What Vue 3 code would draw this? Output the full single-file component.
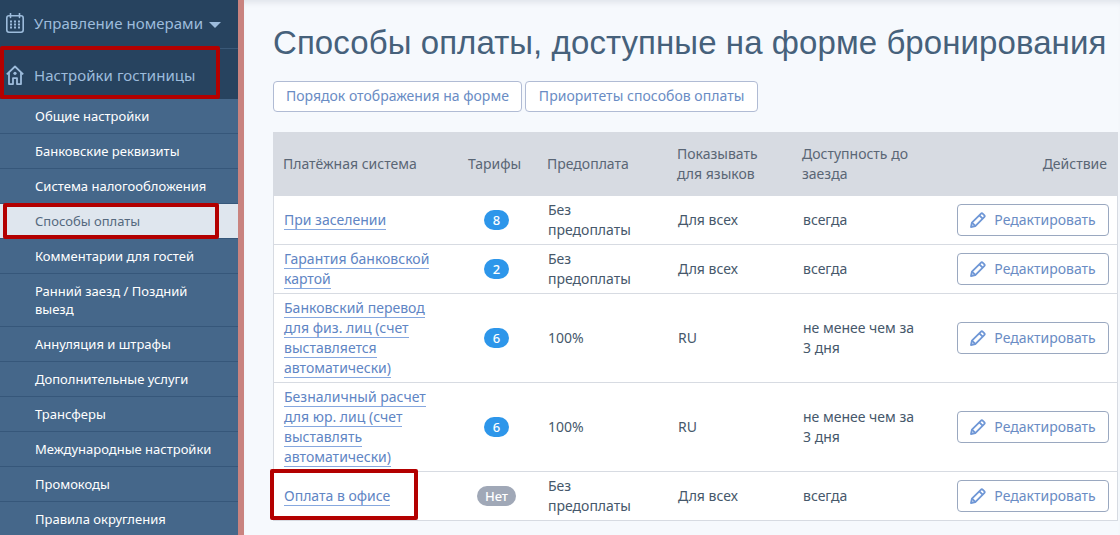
<script setup>
const subs = [
  'Общие настройки','Банковские реквизиты','Система налогообложения','Способы оплаты','Комментарии для гостей',
  'Ранний заезд / Поздний выезд','Аннуляция и штрафы','Дополнительные услуги','Трансферы','Международные настройки','Промокоды','Правила округления'
]
const rows = [
  { lines: ['При заселении'], n: '8', pre: ['Без', 'предоплаты'], lang: 'Для всех', av: 'всегда' },
  { lines: ['Гарантия банковской', 'картой'], n: '2', pre: ['Без', 'предоплаты'], lang: 'Для всех', av: 'всегда' },
  { lines: ['Банковский перевод', 'для физ. лиц (счет', 'выставляется', 'автоматически)'], n: '6', pre: ['100%'], lang: 'RU', av: 'не менее чем за 3 дня' },
  { lines: ['Безналичный расчет', 'для юр. лиц (счет', 'выставлять', 'автоматически)'], n: '6', pre: ['100%'], lang: 'RU', av: 'не менее чем за 3 дня' },
  { lines: ['Оплата в офисе'], n: 'Нет', off: true, pre: ['Без', 'предоплаты'], lang: 'Для всех', av: 'всегда' }
]
</script>

<template>
  <div class="page">
    <aside class="side">
      <div class="top first">
        <svg class="ico" width="18" height="20" viewBox="0 0 18 20" fill="none" stroke="#9dbcdc" stroke-width="1.6">
          <rect x="0.8" y="2.800" width="16.400" height="16.400" rx="2.200" />
          <path d="M4.500 0.500v4M13.500 0.500v4" stroke-linecap="round" />
          <path d="M4 8.500h2M8 8.500h2M12 8.500h2M4 11.500h2M8 11.500h2M12 11.500h2M4 14.500h2M8 14.500h2M12 14.500h2" stroke-width="1.800" />
        </svg>
        <span>Управление номерами</span>
        <i class="caret"></i>
      </div>
      <div class="top second">
        <svg class="ico" width="18" height="20" viewBox="0 0 18 20" fill="none" stroke="#9dbcdc" stroke-width="1.800" stroke-linejoin="round">
          <path d="M0.800 9.300 9 1.500l8.200 7.800" />
          <path d="M3 7.500v11.600h4v-6h4v6h4V7.500" />
          <circle cx="9" cy="8.300" r="1.600" fill="#9dbcdc" stroke="none" />
        </svg>
        <span>Настройки гостиницы</span>
      </div>
      <ul class="menu">
        <li v-for="s in subs" :key="s" :class="{ active: s === 'Способы оплаты' }">{{ s }}</li>
      </ul>
      <div class="mark m1"></div>
      <div class="mark m2"></div>
    </aside>
    <div class="strip"></div>
    <main class="main">
      <h1>Способы оплаты, доступные на форме бронирования</h1>
      <div class="btns">
        <button class="btn">Порядок отображения на форме</button>
        <button class="btn">Приоритеты способов оплаты</button>
      </div>
      <table>
        <colgroup>
          <col class="c1" /><col class="c2" /><col class="c3" /><col class="c4" /><col class="c5" /><col />
        </colgroup>
        <thead>
          <tr>
            <th>Платёжная система</th>
            <th>Тарифы</th>
            <th>Предоплата</th>
            <th>Показывать<br />для языков</th>
            <th>Доступность до<br />заезда</th>
            <th class="right">Действие</th>
          </tr>
        </thead>
        <tbody>
          <tr v-for="r in rows" :key="r.lines[0]">
            <td class="name"><template v-for="(l, i) in r.lines" :key="l"><a>{{ l }}</a><br v-if="i < r.lines.length - 1" /></template></td>
            <td class="mid"><span class="badge" :class="{ off: r.off }">{{ r.n }}</span></td>
            <td><template v-for="(p, i) in r.pre" :key="p">{{ p }}<br v-if="i < r.pre.length - 1" /></template></td>
            <td>{{ r.lang }}</td>
            <td>{{ r.av }}</td>
            <td class="right">
              <button class="edit">
                <svg width="16" height="16" viewBox="0 0 16 16" fill="none" stroke="#6f97d6" stroke-width="1.800" stroke-linejoin="round">
                  <path d="M1 15l.9-4.300L10.800 1.800a1.500 1.500 0 0 1 2.100 0l1.300 1.300a1.500 1.500 0 0 1 0 2.100L5.300 14.100z" />
                  <path d="M9.300 3.300l3.400 3.400M2 10.700l3.300 3.300" />
                </svg>
                Редактировать
              </button>
            </td>
          </tr>
        </tbody>
      </table>
      <div class="mark m3"></div>
    </main>
  </div>
</template>

<style>
html, body { margin: 0; background: #f6f9fd; overflow: hidden; }
</style>

<style scoped>
.page {
  display: flex;
  width: 1120px;
  height: 535px;
  overflow: hidden;
  font-family: "Noto Sans", "Open Sans", sans-serif;
  background: #f6f9fd;
}
.side {
  position: relative;
  flex: 0 0 238px;
  background: #27435f;
}
.strip { flex: 0 0 6px; background: #c9837f; }
.top {
  display: flex;
  align-items: center;
  box-sizing: border-box;
  padding-left: 6px;
  color: #9dbcdc;
  font-size: 15px;
  letter-spacing: 0.05px;
}
.top span { margin-left: 10px; }
.first { height: 49px; border-bottom: 1px solid #3a5877; padding-bottom: 2px; }
.second { height: 50px; padding-top: 1px; }
.caret {
  margin: 4px 0 0 6px;
  border: 6px solid transparent;
  border-top: 6px solid #9dbcdc;
  border-bottom: 0;
}
.menu { list-style: none; margin: 0; padding: 0; }
.menu li {
  box-sizing: border-box;
  padding: 8px 20px 8px 35px;
  background: #45678a;
  border-bottom: 1px solid #36577a;
  color: #fff;
  font-size: 13px;
  font-weight: 400;
  line-height: 18px;
}
.menu li.active {
  background: #dfe6ee;
  color: #55697e;
}
.main {
  position: relative;
  flex: 1;
  min-width: 0;
  box-sizing: border-box;
  padding: 20px 2px 0 29px;
  box-shadow: inset 0 6px 6px -4px rgba(40, 50, 70, 0.12);
}
h1 {
  margin: 0;
  color: #46617b;
  font-family: "Liberation Sans", Arial, sans-serif;
  font-size: 33px;
  font-weight: 400;
  line-height: 45px;
  letter-spacing: 0.08px;
  white-space: nowrap;
}
.btns { display: flex; gap: 3px; margin-top: 16px; }
.btn {
  height: 31px;
  padding: 0 12px 2px;
  border: 1px solid #b0bbd4;
  border-radius: 4px;
  background: #fff;
  color: #6a8cc4;
  font: 14px "Noto Sans", sans-serif;
}
.btn + .btn { padding: 0 13px 2px; letter-spacing: 0.04px; }
table {
  width: 845px;
  margin-top: 20px;
  table-layout: fixed;
  border-collapse: separate;
  border-spacing: 0;
  color: #46586b;
  font-size: 14px;
  line-height: 20px;
}
.c1 { width: 185px; }
.c2 { width: 79px; }
.c3 { width: 130px; }
.c4 { width: 125px; }
.c5 { width: 140px; }
th {
  height: 64px;
  box-sizing: border-box;
  padding: 0 10px;
  background: #d7dbe2;
  color: #5a6675;
  font-weight: 400;
  text-align: left;
}
td {
  padding: 4px 10px 4px 11px;
  background: #fff;
  border-bottom: 1px solid #d7dbe2;
  vertical-align: middle;
}
td:first-child { border-left: 1px solid #d7dbe2; padding-left: 10px; }
td:last-child { border-right: 1px solid #d7dbe2; }
td.mid { text-align: center; padding: 4px 2px 4px 0; }
td.right { text-align: right; padding-right: 8px; }
th.right { text-align: right; padding-right: 11px; }
.name a { color: #6085c4; border-bottom: 1px solid #86a8df; }
.badge {
  display: inline-block;
  min-width: 13px;
  padding: 0 6px;
  border-radius: 10px;
  background: #2d96ea;
  color: #fff;
  font-size: 13px;
  font-weight: 500;
  line-height: 20px;
}
.badge.off { background: #a0a8b7; padding: 0 8px; }
.edit {
  display: inline-flex;
  align-items: center;
  justify-content: center;
  gap: 8px;
  width: 152px;
  height: 32px;
  padding: 0 0 1px;
  border: 1px solid #9aa8c0;
  border-radius: 4px;
  background: #fff;
  color: #6a8cc4;
  font: 14px "Noto Sans", sans-serif;
  vertical-align: middle;
}
.mark {
  position: absolute;
  box-sizing: border-box;
  border: 4px solid #b30000;
  border-radius: 2px;
  pointer-events: none;
}
.m1 { left: 0; top: 46px; width: 220px; height: 53px; }
.m2 { left: 3px; top: 203px; width: 216px; height: 36px; }
.m3 { left: 26px; top: 469px; width: 148px; height: 51px; }
</style>
